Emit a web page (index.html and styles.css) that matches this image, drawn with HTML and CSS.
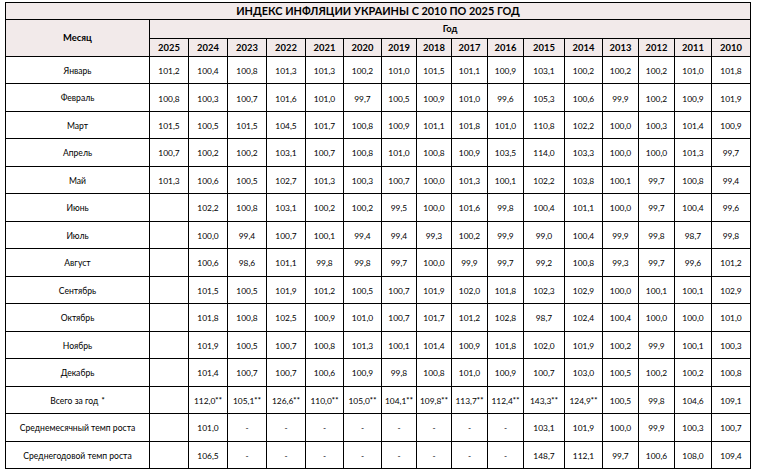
FILE: index.html
```html
<!DOCTYPE html>
<html lang="ru">
<head>
<meta charset="utf-8">
<title>Индекс инфляции Украины</title>
<link rel="stylesheet" href="styles.css">
</head>
<body>
<div class="tbl">
  <div class="c h title">ИНДЕКС ИНФЛЯЦИИ УКРАИНЫ С 2010 ПО 2025 ГОД</div>
  <div class="c h month-head">Месяц</div>
  <div class="c h god">Год</div>
  <div class="c h yr">2025</div><div class="c h yr">2024</div><div class="c h yr">2023</div><div class="c h yr">2022</div><div class="c h yr">2021</div><div class="c h yr">2020</div><div class="c h yr">2019</div><div class="c h yr">2018</div><div class="c h yr">2017</div><div class="c h yr">2016</div><div class="c h yr">2015</div><div class="c h yr">2014</div><div class="c h yr">2013</div><div class="c h yr">2012</div><div class="c h yr">2011</div><div class="c h yr">2010</div>

  <div class="c m">Январь</div><div class="c">101,2</div><div class="c">100,4</div><div class="c">100,8</div><div class="c">101,3</div><div class="c">101,3</div><div class="c">100,2</div><div class="c">101,0</div><div class="c">101,5</div><div class="c">101,1</div><div class="c">100,9</div><div class="c">103,1</div><div class="c">100,2</div><div class="c">100,2</div><div class="c">100,2</div><div class="c">101,0</div><div class="c">101,8</div>

  <div class="c m">Февраль</div><div class="c">100,8</div><div class="c">100,3</div><div class="c">100,7</div><div class="c">101,6</div><div class="c">101,0</div><div class="c">99,7</div><div class="c">100,5</div><div class="c">100,9</div><div class="c">101,0</div><div class="c">99,6</div><div class="c">105,3</div><div class="c">100,6</div><div class="c">99,9</div><div class="c">100,2</div><div class="c">100,9</div><div class="c">101,9</div>

  <div class="c m">Март</div><div class="c">101,5</div><div class="c">100,5</div><div class="c">101,5</div><div class="c">104,5</div><div class="c">101,7</div><div class="c">100,8</div><div class="c">100,9</div><div class="c">101,1</div><div class="c">101,8</div><div class="c">101,0</div><div class="c">110,8</div><div class="c">102,2</div><div class="c">100,0</div><div class="c">100,3</div><div class="c">101,4</div><div class="c">100,9</div>

  <div class="c m">Апрель</div><div class="c">100,7</div><div class="c">100,2</div><div class="c">100,2</div><div class="c">103,1</div><div class="c">100,7</div><div class="c">100,8</div><div class="c">101,0</div><div class="c">100,8</div><div class="c">100,9</div><div class="c">103,5</div><div class="c">114,0</div><div class="c">103,3</div><div class="c">100,0</div><div class="c">100,0</div><div class="c">101,3</div><div class="c">99,7</div>

  <div class="c m">Май</div><div class="c">101,3</div><div class="c">100,6</div><div class="c">100,5</div><div class="c">102,7</div><div class="c">101,3</div><div class="c">100,3</div><div class="c">100,7</div><div class="c">100,0</div><div class="c">101,3</div><div class="c">100,1</div><div class="c">102,2</div><div class="c">103,8</div><div class="c">100,1</div><div class="c">99,7</div><div class="c">100,8</div><div class="c">99,4</div>

  <div class="c m">Июнь</div><div class="c"></div><div class="c">102,2</div><div class="c">100,8</div><div class="c">103,1</div><div class="c">100,2</div><div class="c">100,2</div><div class="c">99,5</div><div class="c">100,0</div><div class="c">101,6</div><div class="c">99,8</div><div class="c">100,4</div><div class="c">101,1</div><div class="c">100,0</div><div class="c">99,7</div><div class="c">100,4</div><div class="c">99,6</div>

  <div class="c m">Июль</div><div class="c"></div><div class="c">100,0</div><div class="c">99,4</div><div class="c">100,7</div><div class="c">100,1</div><div class="c">99,4</div><div class="c">99,4</div><div class="c">99,3</div><div class="c">100,2</div><div class="c">99,9</div><div class="c">99,0</div><div class="c">100,4</div><div class="c">99,9</div><div class="c">99,8</div><div class="c">98,7</div><div class="c">99,8</div>

  <div class="c m">Август</div><div class="c"></div><div class="c">100,6</div><div class="c">98,6</div><div class="c">101,1</div><div class="c">99,8</div><div class="c">99,8</div><div class="c">99,7</div><div class="c">100,0</div><div class="c">99,9</div><div class="c">99,7</div><div class="c">99,2</div><div class="c">100,8</div><div class="c">99,3</div><div class="c">99,7</div><div class="c">99,6</div><div class="c">101,2</div>

  <div class="c m">Сентябрь</div><div class="c"></div><div class="c">101,5</div><div class="c">100,5</div><div class="c">101,9</div><div class="c">101,2</div><div class="c">100,5</div><div class="c">100,7</div><div class="c">101,9</div><div class="c">102,0</div><div class="c">101,8</div><div class="c">102,3</div><div class="c">102,9</div><div class="c">100,0</div><div class="c">100,1</div><div class="c">100,1</div><div class="c">102,9</div>

  <div class="c m">Октябрь</div><div class="c"></div><div class="c">101,8</div><div class="c">100,8</div><div class="c">102,5</div><div class="c">100,9</div><div class="c">101,0</div><div class="c">100,7</div><div class="c">101,7</div><div class="c">101,2</div><div class="c">102,8</div><div class="c">98,7</div><div class="c">102,4</div><div class="c">100,4</div><div class="c">100,0</div><div class="c">100,0</div><div class="c">101,0</div>

  <div class="c m">Ноябрь</div><div class="c"></div><div class="c">101,9</div><div class="c">100,5</div><div class="c">100,7</div><div class="c">100,8</div><div class="c">101,3</div><div class="c">100,1</div><div class="c">101,4</div><div class="c">100,9</div><div class="c">101,8</div><div class="c">102,0</div><div class="c">101,9</div><div class="c">100,2</div><div class="c">99,9</div><div class="c">100,1</div><div class="c">100,3</div>

  <div class="c m">Декабрь</div><div class="c"></div><div class="c">101,4</div><div class="c">100,7</div><div class="c">100,7</div><div class="c">100,6</div><div class="c">100,9</div><div class="c">99,8</div><div class="c">100,8</div><div class="c">101,0</div><div class="c">100,9</div><div class="c">100,7</div><div class="c">103,0</div><div class="c">100,5</div><div class="c">100,2</div><div class="c">100,2</div><div class="c">100,8</div>

  <div class="c m">Всего за год<sup class="ast ast-gap">*</sup></div><div class="c"></div><div class="c">112,0<sup class="ast">**</sup></div><div class="c">105,1<sup class="ast">**</sup></div><div class="c">126,6<sup class="ast">**</sup></div><div class="c">110,0<sup class="ast">**</sup></div><div class="c">105,0<sup class="ast">**</sup></div><div class="c">104,1<sup class="ast">**</sup></div><div class="c">109,8<sup class="ast">**</sup></div><div class="c">113,7<sup class="ast">**</sup></div><div class="c">112,4<sup class="ast">**</sup></div><div class="c">143,3<sup class="ast">**</sup></div><div class="c">124,9<sup class="ast">**</sup></div><div class="c">100,5</div><div class="c">99,8</div><div class="c">104,6</div><div class="c">109,1</div>

  <div class="c m">Среднемесячный темп роста</div><div class="c"></div><div class="c">101,0</div><div class="c">-</div><div class="c">-</div><div class="c">-</div><div class="c">-</div><div class="c">-</div><div class="c">-</div><div class="c">-</div><div class="c">-</div><div class="c">103,1</div><div class="c">101,9</div><div class="c">100,0</div><div class="c">99,9</div><div class="c">100,3</div><div class="c">100,7</div>

  <div class="c m">Среднегодовой темп роста</div><div class="c"></div><div class="c">106,5</div><div class="c">-</div><div class="c">-</div><div class="c">-</div><div class="c">-</div><div class="c">-</div><div class="c">-</div><div class="c">-</div><div class="c">-</div><div class="c">148,7</div><div class="c">112,1</div><div class="c">99,7</div><div class="c">100,6</div><div class="c">108,0</div><div class="c">109,4</div>
</div>
</body>
</html>
```
FILE: styles.css
```css
html, body {
  margin: 0;
  background: #ffffff;
}
body {
  padding: 2px 0 0 5px;
  font-family: Lato, "Open Sans", "Liberation Sans", sans-serif;
  color: #000000;
}
.tbl {
  display: grid;
  width: max-content;
  grid-template-columns: 143px 38px 38px 38px 38px 37px 37px 34px 34px 35px 35px 40px 37px 35px 35px 36px 38px;
  grid-template-rows: 16px 18px 17px repeat(15, 26.47px);
  gap: 1px;
  padding: 1px;
  background: #000000;
}
.c {
  background: #ffffff;
  display: flex;
  align-items: center;
  justify-content: center;
  padding-top: 2px;
  font-size: 8.4px;
  white-space: nowrap;
  line-height: 1;
}
.m {
  font-size: 8.6px;
}
.h {
  background: #f2eaea;
  font-weight: 700;
  padding-top: 0;
}
.title {
  grid-column: 1 / -1;
  font-size: 10.9px;
}
.month-head {
  grid-row: span 2;
  font-size: 9.4px;
}
.god {
  grid-column: span 16;
  font-size: 9.4px;
}
.yr {
  font-size: 9.4px;
}
.ast {
  font-size: 7.5px;
  font-weight: 700;
  line-height: 0;
  vertical-align: 2px;
  letter-spacing: 0.2px;
}
.ast-gap {
  margin-left: 3px;
}
```
